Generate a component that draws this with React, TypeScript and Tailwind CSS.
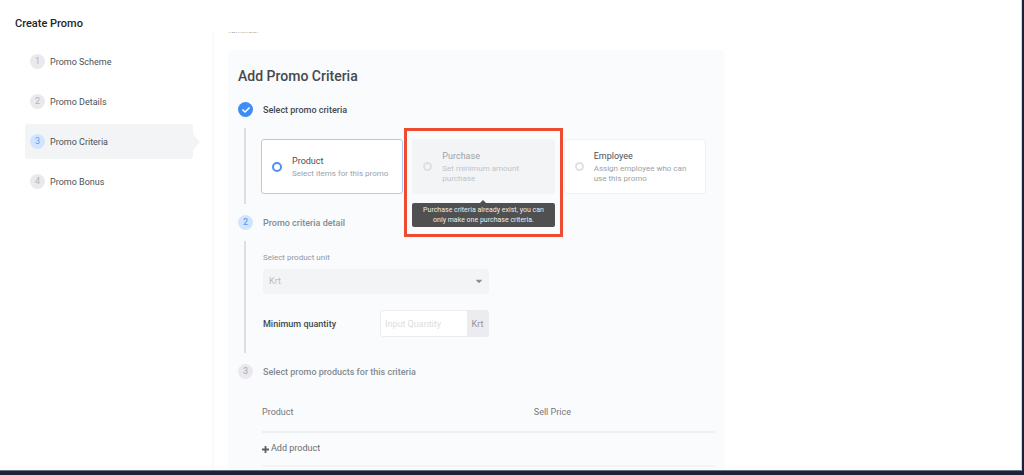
import { ReactNode } from 'react';
import { FaCaretDown, FaCheck } from 'react-icons/fa';
import clsx from 'clsx';

const navItems = ['Promo Scheme', 'Promo Details', 'Promo Criteria', 'Promo Bonus'];

type StepState = 'done' | 'active' | 'idle';

function StepBadge({ value, state }: { value: number; state: StepState }) {
  return (
    <span
      className={clsx(
        'flex size-[15px] shrink-0 items-center justify-center rounded-full text-[9px]',
        state === 'done' && 'bg-[#3f8cf7] text-white',
        state === 'active' && 'bg-[#d3e5fe] text-[#5c9ffa]',
        state === 'idle' && 'bg-[#e9e9ee] text-[#b4b6bd]'
      )}
    >
      {state === 'done' ? <FaCheck className="size-2" /> : value}
    </span>
  );
}

function Sidebar({ current }: { current: number }) {
  return (
    <nav className="w-[214px] shrink-0 border-r-2 border-[#f9f9fb] pr-[19px] pl-[25px]">
      <ul className="flex flex-col gap-[5px] pt-3">
        {navItems.map((item, index) => (
          <li key={item}>
            <a
              href="#"
              className={clsx(
                'relative flex h-[35px] items-center gap-[5px] rounded-[3px] pl-[5px] text-[9px] text-[#4a5056]',
                index === current && 'bg-[#f3f4f6]'
              )}
            >
              <StepBadge value={index + 1} state={index === current ? 'active' : 'idle'} />
              <span className="pt-0.5">{item}</span>
              {index === current && (
                <svg className="absolute top-2.5 left-full h-4 w-[7px]" viewBox="0 0 7 16">
                  <path d="M0 0l7 8-7 8z" fill="#f3f4f6" />
                </svg>
              )}
            </a>
          </li>
        ))}
      </ul>
    </nav>
  );
}

type StepProps = {
  value: number;
  title: string;
  state: StepState;
  children: ReactNode;
};

function Step({ value, title, state, children }: StepProps) {
  return (
    <section className="flex flex-col gap-[11px]">
      <h3
        className={clsx(
          'flex h-[15px] items-center gap-2.5 text-[9px] font-medium',
          state === 'done' ? 'text-[#43494f]' : 'text-[#858a91]'
        )}
      >
        <StepBadge value={value} state={state} />
        <span className="pt-0.5">{title}</span>
      </h3>
      {children}
    </section>
  );
}

function StepBody({ children }: { children: ReactNode }) {
  return (
    <div className="flex">
      <div className="ml-1.5 w-[2px] shrink-0 bg-[#dcdee1]" />
      <div className="min-w-0 flex-1">{children}</div>
    </div>
  );
}

type CriteriaCardProps = {
  title: string;
  text: string;
  checked?: boolean;
  disabled?: boolean;
};

function CriteriaCard({ title, text, checked, disabled }: CriteriaCardProps) {
  return (
    <label
      className={clsx(
        'flex h-[55px] items-center rounded-[3px] border pl-2.5',
        checked && 'border-[#a9cbfb] bg-white',
        disabled && 'border-[#f3f4f6] bg-[#f3f4f6]',
        !checked && !disabled && 'border-[#f0f1f4] bg-white pr-4'
      )}
    >
      <input
        type="radio"
        name="criteria"
        defaultChecked={checked}
        disabled={disabled}
        className="mr-2.5 size-[9px] shrink-0 appearance-none rounded-full border-2 border-[#dfe0e5] bg-white checked:size-2.5 checked:border-[#4a92f8] disabled:bg-transparent"
      />
      <span className="flex flex-col gap-px">
        <span className={clsx('text-[9px] leading-[14px]', disabled ? 'text-[#9da1a8]' : 'text-[#4a5056]')}>
          {title}
        </span>
        <span className={clsx('text-[8px] leading-[10px]', disabled ? 'text-[#c0c3c9]' : 'text-[#9b9fa8]')}>
          {text}
        </span>
      </span>
    </label>
  );
}

function CriteriaPicker() {
  return (
    <div className="grid grid-cols-3 gap-[9px] pt-[11px] pr-[9px] pb-2.5 pl-[15px]">
      <CriteriaCard title="Product" text="Select items for this promo" checked />
      <div className="relative">
        <CriteriaCard title="Purchase" text="Set minimum amount purchase" disabled />
        <div
          role="tooltip"
          className="absolute inset-x-0 top-full mt-[9px] rounded-[2px] bg-[#505050] px-2 py-[2px] text-center text-[7px] leading-[10px] text-[#ececec]"
        >
          <svg className="absolute -top-[3px] left-1/2 h-[3px] w-1.5 -translate-x-1/2" viewBox="0 0 6 3">
            <path d="M0 3l3-3 3 3z" fill="#505050" />
          </svg>
          Purchase criteria already exist, you can only make one purchase criteria.
        </div>
        <div className="pointer-events-none absolute -inset-x-2 -top-[11px] h-[109px] border-[3px] border-[#ee4b31]" />
      </div>
      <CriteriaCard title="Employee" text="Assign employee who can use this promo" />
    </div>
  );
}

function CriteriaDetail() {
  return (
    <div className="max-w-[243px] pt-[11px] pb-4 pl-[17px]">
      <label htmlFor="unit" className="block text-[8px] leading-3 text-[#92969d]">
        Select product unit
      </label>
      <div className="relative mt-[5px]">
        <select
          id="unit"
          disabled
          className="block h-[25px] w-full appearance-none rounded-[3px] bg-[#f3f4f6] px-1.5 text-[9px] text-[#b9bcc2] opacity-100"
        >
          <option>Krt</option>
        </select>
        <FaCaretDown className="pointer-events-none absolute top-[7px] right-[5px] size-2.5 text-[#8d8f94]" />
      </div>
      <div className="mt-4 flex items-center justify-between">
        <label htmlFor="quantity" className="pt-0.5 text-[9px] font-medium text-[#43494f]">
          Minimum quantity
        </label>
        <div className="flex h-[27px] w-[109px] overflow-hidden rounded-[3px] border border-[#ebebf0]">
          <input
            id="quantity"
            placeholder="Input Quantity"
            className="min-w-0 flex-1 rounded-[2px] bg-white px-1 pt-0.5 text-[9px] text-[#43494f] placeholder:text-[#dcdde0]"
          />
          <span className="flex w-[21px] items-center justify-center bg-[#ebebf0] pt-0.5 text-[9px] text-[#92949d]">
            Krt
          </span>
        </div>
      </div>
    </div>
  );
}

function ProductTable() {
  return (
    <div className="pl-6">
      <table className="w-full table-fixed text-left text-[9px] text-[#74777b]">
        <thead>
          <tr className="h-[42px] border-b-2 border-[#eef0f2]">
            <th className="w-3/5 pt-1 font-normal">Product</th>
            <th className="pt-1 font-normal">Sell Price</th>
          </tr>
        </thead>
        <tbody>
          <tr className="h-[34px] border-b-2 border-[#f3f4f6]">
            <td colSpan={2}>
              <button type="button" className="flex items-center gap-[2px] text-[#696c70]">
                <svg className="size-[7px]" viewBox="0 0 7 7" fill="none" stroke="#5c5f62" strokeWidth="1.8">
                  <path d="M3.5 0v7M0 3.5h7" />
                </svg>
                Add product
              </button>
            </td>
          </tr>
        </tbody>
      </table>
    </div>
  );
}

export default function App() {
  return (
    <div className="flex min-h-screen flex-col border-r-2 border-b-4 border-[#1c2139] bg-[#1c2139] font-[Roboto,sans-serif]">
      <div className="flex flex-1 flex-col border-r border-b border-r-[#d5d7dc] border-b-[#6b6f7d] bg-white">
        <header className="flex h-8 items-end pl-[15px]">
          <h1 className="text-[11px] leading-4 font-medium text-[#242629]">Create Promo</h1>
        </header>
        <div className="flex flex-1">
          <Sidebar current={2} />
          <main className="flex max-w-[511px] min-w-0 flex-1 flex-col pl-3.5">
            {/* last line of the section scrolled under the header */}
            <div className="flex h-[2px] items-end overflow-hidden text-[8px] leading-[6px] text-[#a5a8ad]">
              families.
            </div>
            <div className="mt-4 rounded-t-[5px] bg-[#fafbfd] px-2.5 pt-4 pb-[3px]">
              <h2 className="text-[14px] leading-5 font-medium text-[#45494d]">Add Promo Criteria</h2>
              <div className="mt-4 flex flex-col gap-[11px]">
                <Step value={1} title="Select promo criteria" state="done">
                  <StepBody>
                    <CriteriaPicker />
                  </StepBody>
                </Step>
                <Step value={2} title="Promo criteria detail" state="active">
                  <StepBody>
                    <CriteriaDetail />
                  </StepBody>
                </Step>
                <Step value={3} title="Select promo products for this criteria" state="idle">
                  <ProductTable />
                </Step>
              </div>
            </div>
          </main>
        </div>
      </div>
    </div>
  );
}
